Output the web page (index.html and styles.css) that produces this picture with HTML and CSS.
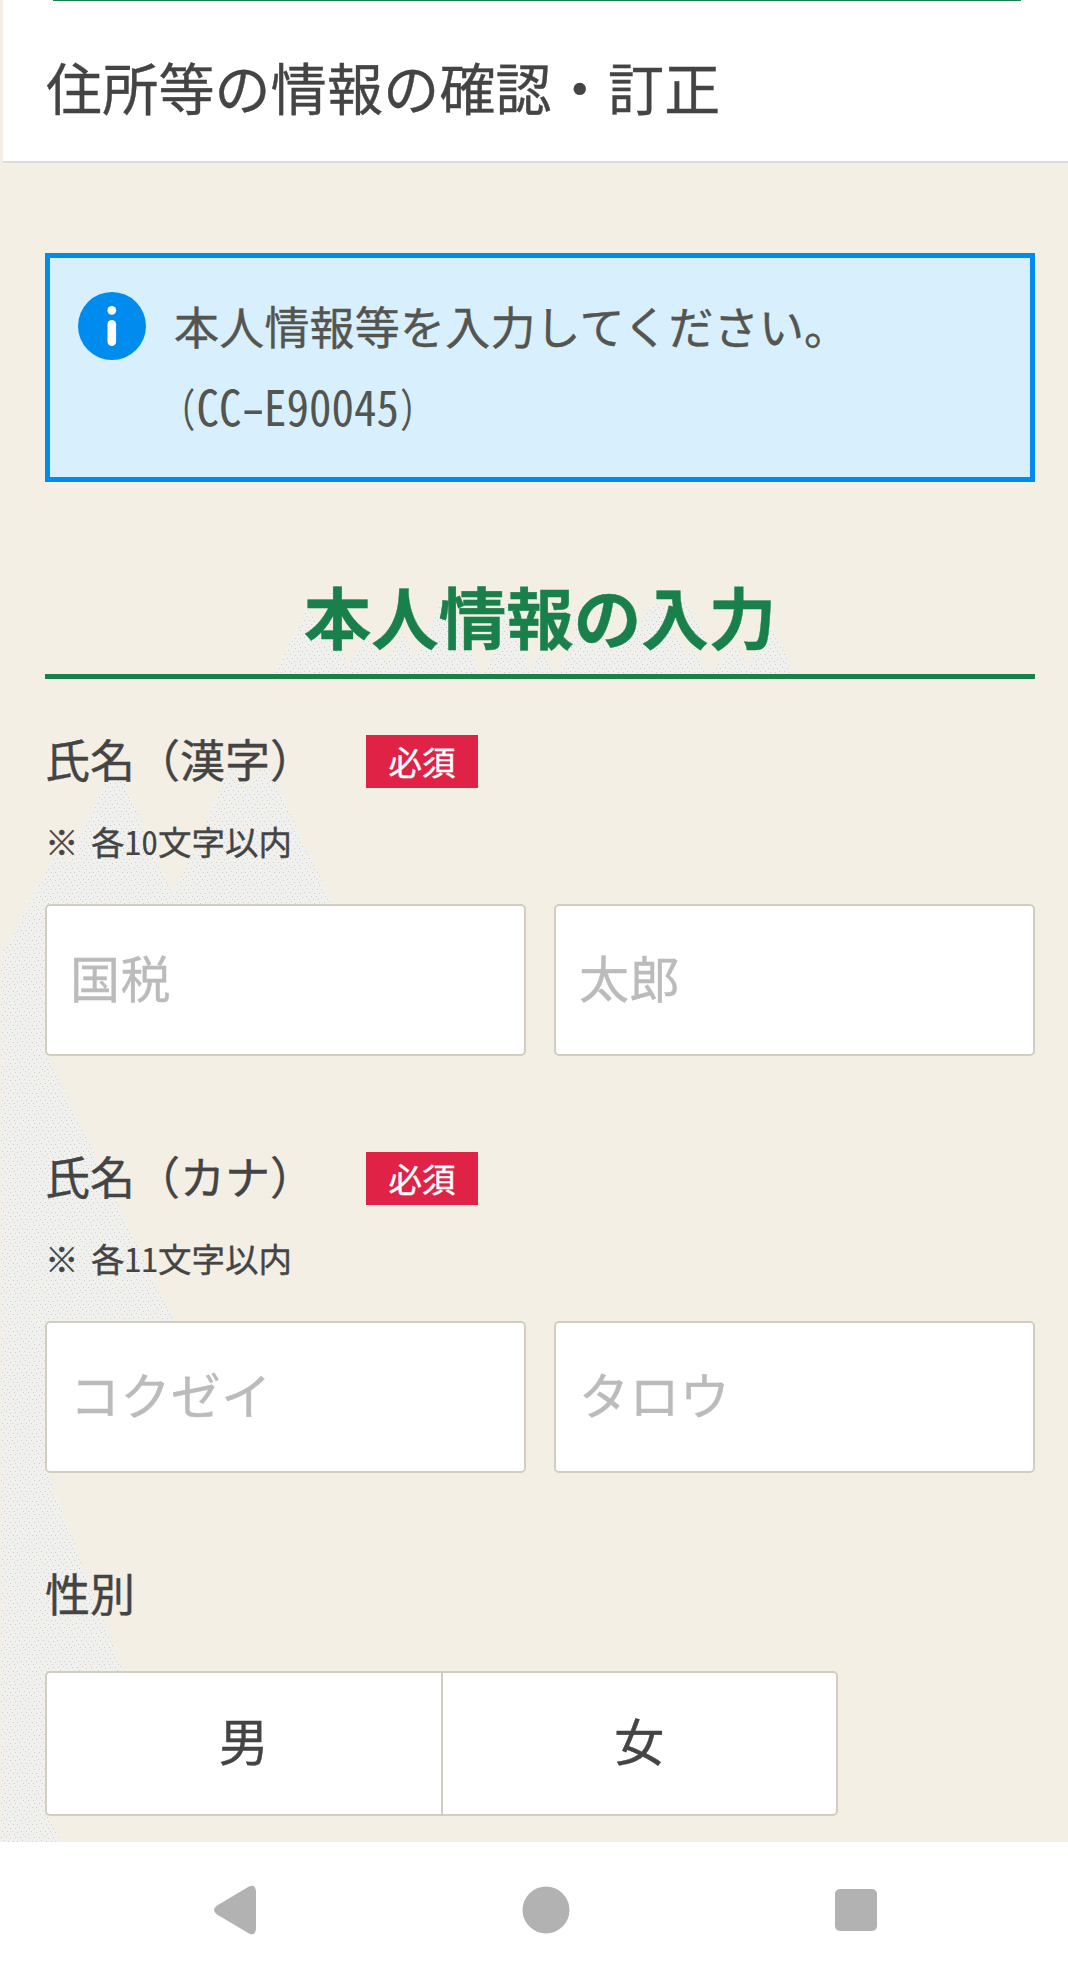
FILE: index.html
```html
<!DOCTYPE html>
<html lang="ja">
<head>
    <meta charset="UTF-8">
    <meta name="viewport" content="width=device-width, initial-scale=1.0">
    <title>住所等の情報の確認・訂正</title>
    <link rel="stylesheet" href="styles.css">
</head>
<body>
    <!-- Dotted mountains behind the form -->
    <svg class="texture" width="1068" height="1842" viewBox="0 0 1068 1842" aria-hidden="true">
        <defs>
            <pattern id="dots" width="19" height="17" patternUnits="userSpaceOnUse">
                <rect width="19" height="17" fill="#f0f1ef"/>
                <path d="M1 1h1v1h-1zM6 0h1v1h-1zM10 2h1v1h-1zM15 1h1v1h-1zM3 4h1v1h-1zM8 5h1v1h-1zM13 5h1v1h-1zM17 5h1v1h-1zM0 8h1v1h-1zM5 8h1v1h-1zM10 9h1v1h-1zM15 9h1v1h-1zM2 12h1v1h-1zM7 12h1v1h-1zM12 12h1v1h-1zM17 13h1v1h-1zM4 15h1v1h-1zM9 15h1v1h-1zM14 15h1v1h-1z" fill="#d2cec3"/>
            </pattern>
        </defs>
        <g fill="url(#dots)">
            <path d="M275 674L308 606L320 628L328 648L332 589H335L341 640L347 668L364 635L375 648L386 662L402 632L415 657L443 600L451 610L460 624L480 674Z"/>
            <path d="M484 674L500 640L505 602L510 598L520 640L530 672L542 650L555 674Z"/>
            <path d="M558 674L575 630L573 605L583 630L594 651L604 640L614 653L630 615L635 633L657 597L665 610L686 656L693 643L708 674Z"/>
            <path d="M682 590L708 642L690 640ZM711 674L734 641L748 666L762 640L773 625L793 674Z"/>
            <path d="M1 957L54 857L60 850L66 864L108 779H123L173 894L230 768H240L248 791L260 766H268L333 905L300 960H1Z"/>
            <path d="M1 957H45V1050L174 1321L45 1400V1466L123 1671L45 1740V1810L61 1842H1Z"/>
        </g>
        <path d="M65 1590L84 1588L75 1624Z" fill="#f3efe4"/>
    </svg>

    <header class="page-header">
        <h1>住所等の情報の確認・訂正</h1>
    </header>

    <main>
        <div class="info">
            <svg class="info-icon" width="68" height="68" viewBox="0 0 68 68">
                <circle cx="34" cy="34" r="34" fill="#008cee"/>
                <circle cx="33.8" cy="18.3" r="4.4" fill="#fff"/>
                <rect x="29.5" y="28" width="8.6" height="26" rx="4.3" fill="#fff"/>
            </svg>
            <p>本人情報等を入力してください。<br><span class="code"><span class="open">(</span>CC<span class="dash">-</span>E90045<span class="close">)</span></span></p>
        </div>

        <h2>本人情報の入力</h2>

        <div class="field">
            <div class="label-row">
                <label for="sei">氏名（漢字）</label>
                <span class="required">必須</span>
            </div>
            <p class="note">※ 各<span class="num">10</span>文字以内</p>
            <div class="inputs">
                <input type="text" id="sei" placeholder="国税">
                <input type="text" id="mei" placeholder="太郎">
            </div>
        </div>

        <div class="field">
            <div class="label-row">
                <label for="seiKana">氏名（カナ）</label>
                <span class="required">必須</span>
            </div>
            <p class="note">※ 各<span class="num">11</span>文字以内</p>
            <div class="inputs">
                <input type="text" id="seiKana" placeholder="コクゼイ">
                <input type="text" id="meiKana" placeholder="タロウ">
            </div>
        </div>

        <div class="field">
            <div class="label-row gender-label">性別</div>
            <div class="gender">
                <button type="button">男</button>
                <button type="button">女</button>
            </div>
        </div>
    </main>

    <nav class="system-nav">
        <svg width="48" height="50" viewBox="0 0 48 50">
            <path d="M37 1.6Q43 -1.5 44 6V44Q43 51.500 37 48.400L5 29.500Q-1 25 5 20.500Z" fill="#b2b2b2"/>
        </svg>
        <svg width="48" height="50" viewBox="0 0 48 50">
            <circle cx="24" cy="25" r="23.500" fill="#b2b2b2"/>
        </svg>
        <svg width="48" height="50" viewBox="0 0 48 50">
            <rect x="3" y="4" width="42" height="42" rx="5" fill="#b2b2b2"/>
        </svg>
    </nav>
</body>
</html>
```

FILE: styles.css
```css
* {
    box-sizing: border-box;
}
body {
    position: relative;
    margin: 0;
    height: 1976px;
    overflow: hidden;
    background-color: #f3efe4;
    color: #444;
    font-family: "Noto Sans CJK JP", sans-serif;
    -webkit-text-stroke: 0.4px;
}
h1, h2, p {
    margin: 0;
}
.texture {
    position: absolute;
    top: 0;
    left: 0;
    z-index: -1;
}
.page-header {
    height: 163px;
    margin-left: 3px;
    padding: 0 47px 0 50px;
    background-color: #fff;
    border-bottom: 2px solid #dcdbd9;
}
.page-header h1 {
    border-top: 1px solid #1a804b;
    padding-top: 45px;
    text-indent: -7px;
    font-size: 56px;
    line-height: 80px;
    font-weight: 400;
    letter-spacing: 0.2px;
}
main {
    height: 1679px;
    padding: 90px 33px 0 45px;
}
.info {
    display: flex;
    gap: 28px;
    height: 229px;
    padding: 28px 28px 26px;
    background-color: #d8f0fe;
    border: 5px solid #008cee;
    color: #555550;
    font-size: 45px;
    line-height: 80px;
    letter-spacing: 0.2px;
}
.info-icon {
    margin-top: 6px;
}
/* Half-width latin letters and digits */
.code, .num {
    font-feature-settings: "hwid";
    -webkit-text-stroke: 0;
}
.code {
    display: inline-block;
    letter-spacing: 0;
    transform: translateY(-1px) scaleY(1.08);
}
.dash, .open, .close {
    display: inline-block;
}
.dash {
    transform: scaleX(1.35);
}
.open {
    transform: scale(0.72, 0.88);
    transform-origin: right center;
}
.close {
    transform: scale(0.72, 0.88);
    transform-origin: left center;
}
h2 {
    margin-top: 92px;
    padding: 1px 0 19px;
    border-bottom: 5px solid #1a804b;
    color: #1a804b;
    font-size: 67.5px;
    line-height: 80px;
    font-weight: 700;
    text-align: center;
}
.field {
    margin-top: 96px;
}
h2 + .field {
    margin-top: 56px;
}
.label-row {
    display: flex;
    height: 53px;
    font-size: 45px;
    line-height: 47px;
}
.label-row label {
    width: 321px;
}
.required {
    width: 112px;
    height: 53px;
    background-color: #e02246;
    color: #fff;
    font-size: 33.5px;
    line-height: 51px;
    font-weight: 400;
    text-align: center;
}
.note {
    margin-top: 28px;
    font-size: 33.5px;
    line-height: 50px;
    word-spacing: 5px;
}
.inputs {
    display: flex;
    gap: 28px;
    margin-top: 38px;
}
.inputs input {
    flex: 1;
    min-width: 0;
    height: 152px;
    padding: 0 22px 8px 23px;
    background-color: #fff;
    border: 2px solid #d2cdc1;
    border-radius: 5px;
    color: #444;
    font: 50px "Noto Sans CJK JP", sans-serif;
    letter-spacing: 0.4px;
}
.inputs input::placeholder {
    color: #bbb;
    opacity: 1;
}
.gender-label {
    height: 45px;
}
.gender {
    display: flex;
    width: 793px;
    height: 145px;
    margin-top: 57px;
    background-color: #fff;
    border: 2px solid #d2cdc1;
    border-radius: 5px;
}
.gender button {
    flex: 1;
    padding: 0 0 9px;
    background: none;
    border: none;
    color: #444;
    font: 50px "Noto Sans CJK JP", sans-serif;
}
.gender button + button {
    border-left: 2px solid #d2cdc1;
}
.system-nav {
    display: flex;
    justify-content: space-between;
    height: 134px;
    padding: 43px 188px 0 212px;
    background-color: #fff;
}
```
